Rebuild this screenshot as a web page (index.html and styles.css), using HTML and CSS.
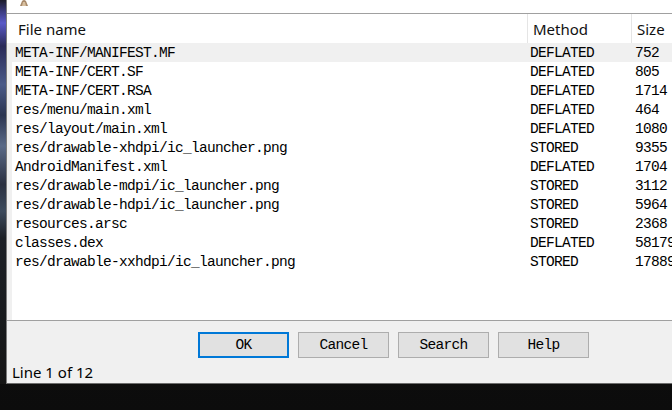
FILE: index.html
```html
<!DOCTYPE html>
<html>
<head>
<meta charset="utf-8">
<link rel="stylesheet" href="styles.css">
</head>
<body>
<div class="screen">
  <div class="wall"></div>
  <div class="dialog">
    <div class="titlebar">
      <svg class="appicon" width="12" height="6" viewBox="0 0 12 6"><path d="M2 6 L4 1 Q6 -1 8 1 L10 6 Z" fill="#a88a6a"/><path d="M4 6 L5 2 L7 2 L8 6 Z" fill="#d8c0a0"/></svg>
    </div>
    <div class="list">
      <div class="head">
        <div class="c1">File name</div>
        <div class="c2">Method</div>
        <div class="c3">Size</div>
      </div>
      <div class="rows">
        <div class="row sel"><div class="c1">META-INF/MANIFEST.MF</div><div class="c2">DEFLATED</div><div class="c3">752</div></div>
        <div class="row"><div class="c1">META-INF/CERT.SF</div><div class="c2">DEFLATED</div><div class="c3">805</div></div>
        <div class="row"><div class="c1">META-INF/CERT.RSA</div><div class="c2">DEFLATED</div><div class="c3">1714</div></div>
        <div class="row"><div class="c1">res/menu/main.xml</div><div class="c2">DEFLATED</div><div class="c3">464</div></div>
        <div class="row"><div class="c1">res/layout/main.xml</div><div class="c2">DEFLATED</div><div class="c3">1080</div></div>
        <div class="row"><div class="c1">res/drawable-xhdpi/ic_launcher.png</div><div class="c2">STORED</div><div class="c3">9355</div></div>
        <div class="row"><div class="c1">AndroidManifest.xml</div><div class="c2">DEFLATED</div><div class="c3">1704</div></div>
        <div class="row"><div class="c1">res/drawable-mdpi/ic_launcher.png</div><div class="c2">STORED</div><div class="c3">3112</div></div>
        <div class="row"><div class="c1">res/drawable-hdpi/ic_launcher.png</div><div class="c2">STORED</div><div class="c3">5964</div></div>
        <div class="row"><div class="c1">resources.arsc</div><div class="c2">STORED</div><div class="c3">2368</div></div>
        <div class="row"><div class="c1">classes.dex</div><div class="c2">DEFLATED</div><div class="c3">581796</div></div>
        <div class="row"><div class="c1">res/drawable-xxhdpi/ic_launcher.png</div><div class="c2">STORED</div><div class="c3">17889</div></div>
      </div>
    </div>
    <div class="footer">
      <div class="buttons">
        <button class="btn default">OK</button>
        <button class="btn">Cancel</button>
        <button class="btn">Search</button>
        <button class="btn">Help</button>
      </div>
      <div class="status">Line 1 of 12</div>
    </div>
  </div>
</div>
</body>
</html>
```

FILE: styles.css
```css
html, body {
  margin: 0;
  padding: 0;
}
body {
  width: 672px;
  height: 410px;
  overflow: hidden;
  background: #0f0f10;
}
.screen {
  display: flex;
  align-items: flex-start;
  width: 672px;
  height: 410px;
  overflow: hidden;
  background: linear-gradient(to bottom, #141416 0, #0c0c0c 100%);
}
.wall {
  width: 6px;
  height: 384px;
  flex-shrink: 0;
  background: linear-gradient(to bottom, #1c1c2a 0, #3c3c80 3%, #5a5ac8 6%, #2a2a58 12%, #4a5a88 22%, #2a3450 30%, #5a6a88 38%, #2a3040 48%, #3c4a5c 55%, #1c2026 62%, #151515 100%);
}
.dialog {
  width: 773px;
  flex-shrink: 0;
  display: flex;
  flex-direction: column;
  background: #f0f0f0;
  border-left: 1px solid #7c7c7c;
  border-bottom: 1px solid #6c6c6c;
}
.titlebar {
  height: 13px;
  background: #ffffff;
  position: relative;
}
.appicon {
  position: absolute;
  left: 11px;
  top: 0;
}
.list {
  height: 306px;
  background: #ffffff;
  border-top: 1px solid #a0a0a0;
  border-bottom: 1px solid #a0a0a0;
  display: flex;
  flex-direction: column;
}
.head {
  display: flex;
  height: 29px;
  padding-left: 5px;
  font-family: "Noto Sans", "Open Sans", sans-serif;
  font-size: 15px;
  line-height: 28px;
  color: #111;
}
.head > div {
  box-sizing: border-box;
  padding-top: 1px;
  white-space: nowrap;
}
.head .c1 {
  width: 516px;
  padding-left: 6px;
  border-right: 1px solid #e5e5e5;
}
.head .c2 {
  width: 104px;
  padding-left: 5px;
  border-right: 1px solid #e5e5e5;
}
.head .c3 {
  padding-left: 5px;
}
.rows {
  flex: 1;
  border-left: 5px solid #f0f0f0;
  font-family: "Liberation Mono", "DejaVu Sans Mono", monospace;
  font-size: 14.5px;
  letter-spacing: -0.7px;
  color: #000;
}
.row {
  display: flex;
  height: 19px;
  line-height: 20px;
  white-space: nowrap;
}
.row.sel {
  background: #f0f0f0;
}
.row > div {
  box-sizing: border-box;
}
.row .c1 {
  width: 516px;
  padding-left: 3px;
}
.row .c2 {
  width: 104px;
  padding-left: 2px;
}
.row .c3 {
  padding-left: 3px;
}
.footer {
  height: 62px;
  box-sizing: border-box;
  padding-top: 11px;
  display: flex;
  flex-direction: column;
}
.buttons {
  display: flex;
  justify-content: center;
  gap: 9px;
  height: 26px;
}
.btn {
  width: 91px;
  height: 26px;
  margin: 0;
  padding: 0;
  box-sizing: border-box;
  background: #e1e1e1;
  border: 1px solid #adadad;
  font-family: "Liberation Mono", "DejaVu Sans Mono", monospace;
  font-size: 14.5px;
  letter-spacing: -0.7px;
  color: #000;
  line-height: 22px;
}
.btn.default {
  border: 2px solid #0078d7;
}
.status {
  margin-top: 5px;
  padding-left: 5px;
  height: 18px;
  font-family: "Noto Sans", "Open Sans", sans-serif;
  font-size: 15px;
  line-height: 18px;
  color: #000;
}
```
